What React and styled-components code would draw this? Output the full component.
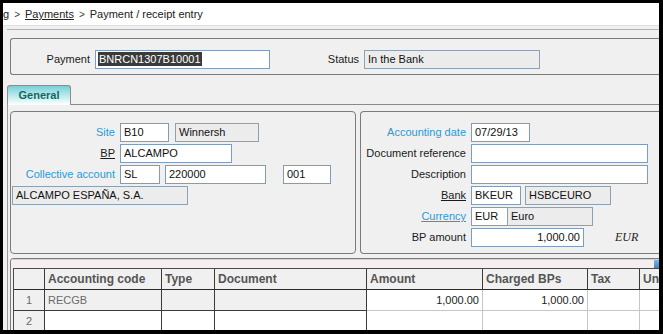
import React from "react";
import styled, { createGlobalStyle } from "styled-components";

const GlobalStyle = createGlobalStyle`
  html, body { margin: 0; padding: 0; background: #000; }
  body {
    width: 663px; height: 334px; overflow: hidden;
    font-family: "Liberation Sans", Arial, sans-serif; font-size: 11px; color: #1a1a1a;
  }
  * { box-sizing: border-box; }
`;

const Frame = styled.div`
  margin: 3px 4px 0 3px;
  width: 656px;
  height: 327px;
  background: #f0f0f0;
  overflow: hidden;
  display: flex;
  flex-direction: column;
`;

const Breadcrumb = styled.div`
  height: 23px;
  background: #fff;
  border-bottom: 1px solid #dde2e6;
  display: flex;
  align-items: center;
  padding-left: 0;
  white-space: nowrap;
  color: #222;
  flex-shrink: 0;
`;

const Crumb = styled.span`
  text-decoration: ${(p) => (p.$link ? "underline" : "none")};
  color: #222;
`;

const Sep = styled.span`
  margin: 0 5px;
  color: #444;
  font-size: 10px;
`;

const Divider = styled.div`
  margin: 3px 0 0 4px;
  height: 1px;
  background: #a7b6c4;
  flex-shrink: 0;
`;

const HeaderBox = styled.div`
  margin: 8px 0 0 7px;
  height: 37px;
  border: 1px solid #7b7b7b;
  border-right: none;
  border-radius: 3px 0 0 3px;
  display: flex;
  align-items: flex-start;
  padding-top: 11px;
  flex-shrink: 0;
`;

const Label = styled.div`
  width: ${(p) => p.$w}px;
  margin-right: 5px;
  text-align: right;
  height: 19px;
  line-height: 19px;
  white-space: nowrap;
  color: ${(p) => (p.$blue ? "#2a9ad4" : "#1a1a1a")};
  text-decoration: ${(p) => (p.$u ? "underline" : "none")};
  flex-shrink: 0;
`;

const Field = styled.div`
  width: ${(p) => p.$w}px;
  height: 19px;
  margin-left: ${(p) => p.$ml || 0}px;
  border: 1px solid ${(p) => (p.$ro ? "#8ea1b3" : "#7f9db9")};
  background: ${(p) => (p.$ro ? "#ececec" : "#fff")};
  padding: 0 3px;
  line-height: 17px;
  white-space: nowrap;
  overflow: hidden;
  text-align: ${(p) => (p.$right ? "right" : "left")};
  color: #111;
  flex-shrink: 0;
`;

const Selected = styled.span`
  background: #3a3a3a;
  color: #fff;
  display: inline-block;
  line-height: 14px;
  margin-left: -1px;
  padding: 0 1px;
`;

const TabBar = styled.div`
  margin: 10px 0 0 4px;
  display: flex;
  flex-shrink: 0;
  position: relative;
  z-index: 1;
  margin-bottom: -1px;
`;

const Tab = styled.div`
  width: 64px;
  height: 20px;
  border: 1px solid #8c8c8c;
  border-bottom: none;
  border-radius: 3px 3px 0 0;
  background: linear-gradient(#76d0d6 0%, #b6e6e9 45%, #ffffff 100%);
  color: #0e6a5f;
  font-weight: bold;
  font-size: 11px;
  display: flex;
  align-items: center;
  justify-content: center;
  padding-bottom: 1px;
`;

const TabPanel = styled.div`
  margin-left: 4px;
  flex: 1;
  border-top: 1px solid #8a8a8a;
  border-left: 1px solid #9a9a9a;
  padding: 6px 0 0 2px;
  display: flex;
  flex-direction: column;
  gap: 4px;
  min-height: 0;
`;

const PanelRow = styled.div`
  display: flex;
  gap: 4px;
  height: 143px;
  flex-shrink: 0;
`;

const Panel = styled.div`
  width: ${(p) => (p.$w ? p.$w + "px" : "auto")};
  flex: ${(p) => (p.$w ? "none" : 1)};
  border: 1px solid #7b7b7b;
  border-right: ${(p) => (p.$open ? "none" : "1px solid #7b7b7b")};
  border-radius: ${(p) => (p.$open ? "4px 0 0 4px" : "4px")};
  padding-top: 11px;
  display: flex;
  flex-direction: column;
  gap: 2px;
`;

const Row = styled.div`
  display: flex;
  align-items: center;
  height: 19px;
  padding-left: ${(p) => p.$pl || 0}px;
`;

const Currency = styled.div`
  margin-left: 31px;
  font-family: "Liberation Serif", "Times New Roman", serif;
  font-style: italic;
  font-size: 12px;
  color: #222;
`;

const GridPanel = styled.div`
  flex: 1;
  border: 1px solid #7b7b7b;
  border-right: none;
  border-bottom: none;
  border-radius: 4px 0 0 0;
  overflow: hidden;
  min-height: 0;
`;

const Band = styled.div`
  height: 9px;
  border-top: 1px solid #c4d6e4;
  background: #f6eeee;
  display: flex;
  justify-content: flex-end;
`;

const BandIcon = styled.div`
  width: 5px;
  height: 8px;
  background: linear-gradient(#7fb4de, #3d86c6);
`;

const Table = styled.div`
  margin-left: 2px;
  border-top: 1px solid #4a4a4a;
  border-left: 1px solid #4a4a4a;
  width: 700px;
`;

const cols = "31px 117px 53px 152px 116px 105px 52px 74px";

const TRow = styled.div`
  display: grid;
  grid-template-columns: ${cols};
  height: ${(p) => p.$h}px;
`;

const Th = styled.div`
  border-right: 1px solid #3a3a3a;
  border-bottom: 1px solid #2a2a2a;
  background: #f0f0f0;
  font-weight: bold;
  font-size: 12px;
  color: #555;
  padding-left: 3px;
  display: flex;
  align-items: center;
  white-space: nowrap;
  overflow: hidden;
`;

const Td = styled.div`
  border-right: 1px solid ${(p) => (p.$light ? "#c6c6c6" : "#3a3a3a")};
  border-bottom: 1px solid ${(p) => (p.$light ? "#c6c6c6" : "#3a3a3a")};
  background: ${(p) => (p.$gray ? "#f0f0f0" : "#fff")};
  color: ${(p) => (p.$num ? "#222" : "#6a6a6a")};
  display: flex;
  align-items: center;
  justify-content: ${(p) => (p.$center ? "center" : p.$right ? "flex-end" : "flex-start")};
  padding: 0 3px;
  white-space: nowrap;
  overflow: hidden;
`;

const headers = ["", "Accounting code", "Type", "Document", "Amount", "Charged BPs", "Tax", "Un"];

export default function App() {
  return (
    <>
      <GlobalStyle />
      <Frame>
        <Breadcrumb>
          <Crumb $link>g</Crumb>
          <Sep>&gt;</Sep>
          <Crumb $link>Payments</Crumb>
          <Sep>&gt;</Sep>
          <Crumb>Payment / receipt entry</Crumb>
        </Breadcrumb>
        <Divider />
        <HeaderBox>
          <Label $w={79}>Payment</Label>
          <Field $w={175}>
            <Selected>BNRCN1307B10001</Selected>
          </Field>
          <Label $w={89}>Status</Label>
          <Field $w={176} $ro>
            In the Bank
          </Field>
        </HeaderBox>
        <TabBar>
          <Tab>General</Tab>
        </TabBar>
        <TabPanel>
          <PanelRow>
            <Panel $w={346}>
              <Row>
                <Label $w={104} $blue>Site</Label>
                <Field $w={49}>B10</Field>
                <Field $w={84} $ml={6} $ro>Winnersh</Field>
              </Row>
              <Row>
                <Label $w={104} $u>BP</Label>
                <Field $w={112}>ALCAMPO</Field>
              </Row>
              <Row>
                <Label $w={104} $blue>Collective account</Label>
                <Field $w={40}>SL</Field>
                <Field $w={101} $ml={5}>220000</Field>
                <Field $w={48} $ml={17}>001</Field>
              </Row>
              <Row $pl={1}>
                <Field $w={176} $ro>ALCAMPO ESPAÑA, S.A.</Field>
              </Row>
            </Panel>
            <Panel $open>
              <Row>
                <Label $w={105} $blue>Accounting date</Label>
                <Field $w={59}>07/29/13</Field>
              </Row>
              <Row>
                <Label $w={105}>Document reference</Label>
                <Field $w={177} />
              </Row>
              <Row>
                <Label $w={105}>Description</Label>
                <Field $w={177} />
              </Row>
              <Row>
                <Label $w={105} $u>Bank</Label>
                <Field $w={50}>BKEUR</Field>
                <Field $w={86} $ml={4} $ro>HSBCEURO</Field>
              </Row>
              <Row>
                <Label $w={105} $blue $u>Currency</Label>
                <Field $w={37}>EUR</Field>
                <Field $w={86} $ml={-1} $ro>Euro</Field>
              </Row>
              <Row>
                <Label $w={105}>BP amount</Label>
                <Field $w={113} $right>1,000.00</Field>
                <Currency>EUR</Currency>
              </Row>
            </Panel>
          </PanelRow>
          <GridPanel>
            <Band>
              <BandIcon />
            </Band>
            <Table>
              <TRow $h={21}>
                {headers.map((h, i) => (
                  <Th key={i}>{h}</Th>
                ))}
              </TRow>
              <TRow $h={21}>
                <Td $gray $center>1</Td>
                <Td $gray>RECGB</Td>
                <Td $gray />
                <Td $gray />
                <Td $light $right $num>1,000.00</Td>
                <Td $light $right $num>1,000.00</Td>
                <Td $light />
                <Td $light />
              </TRow>
              <TRow $h={21}>
                <Td $gray $center>2</Td>
                <Td />
                <Td />
                <Td />
                <Td $light />
                <Td $light />
                <Td $light />
                <Td $light />
              </TRow>
            </Table>
          </GridPanel>
        </TabPanel>
      </Frame>
    </>
  );
}
